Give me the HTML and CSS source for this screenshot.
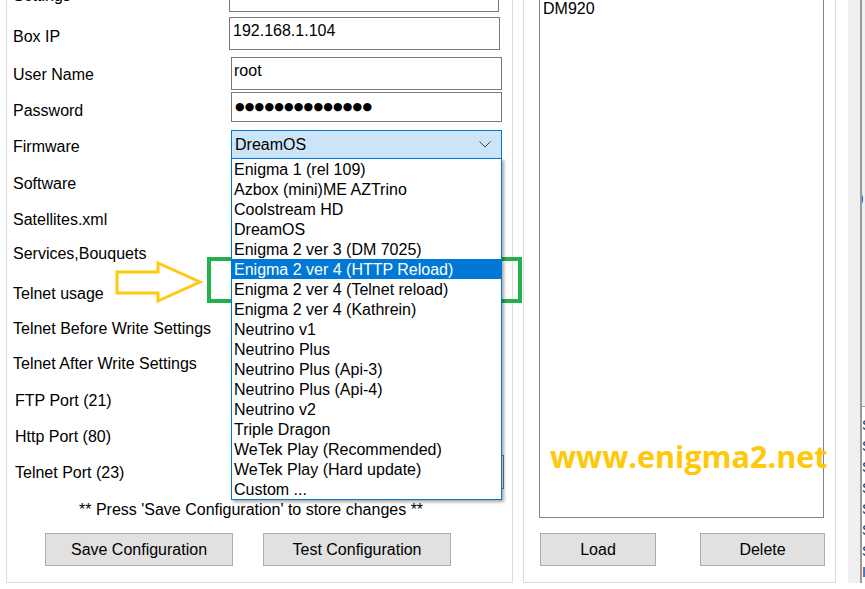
FILE: index.html
```html
<!DOCTYPE html>
<html lang="en">
<head>
    <meta charset="UTF-8">
    <title>Box Configuration</title>
    <link rel="stylesheet" href="styles.css">
</head>
<body>
    <div class="screen">
        <div class="window">
            <!-- Left group: box settings -->
            <section class="group config">
                <div class="row r0"><span class="label">Settings</span><div class="field f0"></div></div>
                <div class="row r1"><span class="label">Box IP</span><div class="field f-ip">192.168.1.104</div></div>
                <div class="row r2"><span class="label">User Name</span><div class="field f-user">root</div></div>
                <div class="row r3"><span class="label">Password</span><div class="field f-pass">●●●●●●●●●●●●●●</div></div>
                <div class="row r4">
                    <span class="label">Firmware</span>
                    <div class="combo">
                        <span>DreamOS</span>
                        <svg class="chevron" width="12" height="7" viewBox="0 0 12 7"><polyline points="0.5,0.5 6,6 11.5,0.5" fill="none" stroke="#444" stroke-width="1"/></svg>
                        <ul class="dropdown">
                            <li>Enigma 1 (rel 109)</li>
                            <li>Azbox (mini)ME AZTrino</li>
                            <li>Coolstream HD</li>
                            <li>DreamOS</li>
                            <li>Enigma 2 ver 3 (DM 7025)</li>
                            <li class="active">Enigma 2 ver 4 (HTTP Reload)</li>
                            <li>Enigma 2 ver 4 (Telnet reload)</li>
                            <li>Enigma 2 ver 4 (Kathrein)</li>
                            <li>Neutrino v1</li>
                            <li>Neutrino Plus</li>
                            <li>Neutrino Plus (Api-3)</li>
                            <li>Neutrino Plus (Api-4)</li>
                            <li>Neutrino v2</li>
                            <li>Triple Dragon</li>
                            <li>WeTek Play (Recommended)</li>
                            <li>WeTek Play (Hard update)</li>
                            <li>Custom ...</li>
                        </ul>
                    </div>
                </div>
                <div class="row r5"><span class="label">Software</span></div>
                <div class="row r6"><span class="label">Satellites.xml</span></div>
                <div class="row r7"><span class="label">Services,Bouquets</span></div>
                <div class="row r8"><span class="label">Telnet usage</span></div>
                <div class="row r9"><span class="label">Telnet Before Write Settings</span></div>
                <div class="row r10"><span class="label">Telnet After Write Settings</span></div>
                <div class="row r11"><span class="label port">FTP Port (21)</span></div>
                <div class="row r12"><span class="label port">Http Port (80)</span></div>
                <div class="row r13"><span class="label port">Telnet Port (23)</span><div class="field f-telnet"></div></div>

                <p class="note">** Press 'Save Configuration' to store changes **</p>
                <div class="buttons">
                    <button class="btn btn-save">Save Configuration</button>
                    <button class="btn btn-test">Test Configuration</button>
                </div>
            </section>

            <!-- Right group: saved boxes -->
            <section class="group boxes">
                <div class="listbox">
                    <div class="list-item">DM920</div>
                </div>
                <div class="buttons">
                    <button class="btn btn-load">Load</button>
                    <button class="btn btn-delete">Delete</button>
                </div>
            </section>

            <!-- Neighbour window edge -->
            <div class="side">
                <div class="side-pane">
                    <div class="side-top"><span class="side-glyph">)</span></div>
                    <div class="side-log">S<br>S<br>S<br>S<br>S<br>S<br>S<br>I</div>
                </div>
            </div>
        </div>

        <!-- Annotations over the screenshot -->
        <svg class="arrow" width="100" height="50" viewBox="110 258 100 50">
            <polygon points="117,272 158,272 158,263 200,282 158,301 158,293 117,293" fill="none" stroke="#ffc90e" stroke-width="3"/>
        </svg>
        <div class="highlight"></div>
        <div class="watermark">www.enigma2.net</div>
    </div>
</body>
</html>
```

FILE: styles.css
```css
* {
    box-sizing: border-box;
}

body {
    margin: 0;
    font-family: "Liberation Sans", Arial, sans-serif;
    font-size: 16px;
    color: #000;
    background: #fff;
}

.screen {
    position: relative;
    width: 865px;
    height: 589px;
    overflow: hidden;
}

.window {
    display: flex;
    margin-top: -30px;
    padding-left: 6px;
}

.group {
    border: 1px solid #dcdcdc;
}

/* Left group */
.config {
    width: 507px;
    padding: 4px 0 10px 0;
}

.row {
    display: flex;
    align-items: flex-start;
    line-height: 18px;
}

.label {
    width: 222px;
    padding-left: 6px;
    flex-shrink: 0;
}

.label.port {
    padding-left: 8px;
}

/* row heights, label placed in the middle of each */
.r0 { height: 40px; }
.r1 { height: 40px; }
.r2 { height: 37px; }
.r3 { height: 36px; }
.r4 { height: 36px; }
.r5 { height: 37px; }
.r6 { height: 35px; }
.r7 { height: 36px; }
.r8 { height: 38px; }
.r9 { height: 35px; }
.r10 { height: 36px; }
.r11 { height: 37px; }
.r12 { height: 35px; }
.r13 { height: 37px; }

.row .label {
    align-self: center;
    margin-top: 2px;
}

.r1 .label { margin-top: 4px; }
.r7 .label { margin-top: 0; }
.r8 .label { margin-top: 5px; }

.field {
    border: 1px solid #7a7a7a;
    background: #fff;
    padding: 4px 3px;
}

.f0 {
    width: 270px;
    height: 32px;
    margin-top: 5px;
}

.f-ip {
    width: 271px;
    height: 33px;
    margin-top: 2px;
}

.f-user {
    width: 271px;
    height: 33px;
    margin-top: 2px;
    margin-left: 2px;
    padding-left: 2px;
}

.f-pass {
    width: 271px;
    height: 30px;
    margin-left: 2px;
    padding: 5px 0 0 3px;
    font-family: "DejaVu Sans", sans-serif;
    font-size: 11px;
    letter-spacing: 0.2px;
    line-height: 18px;
}

.f-telnet {
    width: 273px;
    height: 34px;
    margin-top: 2px;
    margin-left: 2px;
}

.combo {
    position: relative;
    display: flex;
    align-items: center;
    width: 271px;
    height: 28px;
    margin-top: 2px;
    margin-left: 2px;
    padding: 0 3px;
    background: #cce4f7;
    border: 1px solid #0078d7;
    border-bottom: none;
}

.chevron {
    margin-left: auto;
    margin-right: 7px;
}

.dropdown {
    position: absolute;
    top: 100%;
    left: -1px;
    width: 271px;
    margin: 0;
    padding: 0;
    list-style: none;
    background: #fff;
    border: 1px solid #0078d7;
    box-shadow: 2px 2px 3px rgba(0, 0, 0, 0.35);
    z-index: 5;
}

.dropdown li {
    height: 20px;
    line-height: 21px;
    padding-left: 2px;
    white-space: nowrap;
}

.dropdown li.active {
    background: #0078d7;
    color: #fff;
}

.note {
    margin: 10px 0 0 72px;
    line-height: 20px;
}

.buttons {
    display: flex;
    margin-top: 13px;
}

.btn {
    height: 33px;
    font-family: "Liberation Sans", Arial, sans-serif;
    font-size: 16px;
    color: #000;
    background: #e1e1e1;
    border: 1px solid #adadad;
    padding: 0;
}

.btn-save {
    width: 188px;
    margin-left: 38px;
}

.btn-test {
    width: 188px;
    margin-left: 30px;
}

/* Right group */
.boxes {
    width: 313px;
    margin-left: 10px;
    padding: 27px 0 10px 0;
}

.listbox {
    width: 285px;
    height: 520px;
    margin-left: 15px;
    border: 1px solid #828282;
    padding: 1px 3px;
}

.list-item {
    line-height: 18px;
}

.boxes .buttons {
    margin-top: 15px;
}

.btn-load {
    width: 116px;
    margin-left: 16px;
}

.btn-delete {
    width: 125px;
    margin-left: 44px;
}

/* Edge of the next window */
.side {
    width: 17px;
    margin-left: 12px;
    background: #f0f0f0;
    display: flex;
}

.side-pane {
    margin-left: 12px;
    flex: 1;
    border-left: 2px solid #9a9a9a;
    display: flex;
    flex-direction: column;
    overflow: hidden;
}

.side-top {
    height: 437px;
    border-bottom: 1px solid #a0a0a0;
    font-size: 14px;
    padding-top: 220px;
    color: #1e3c78;
}

.side-glyph {
    margin-left: -3px;
}

.side-log {
    flex: 1;
    background: #fff;
    font-size: 14px;
    line-height: 21px;
    padding-top: 8px;
    color: #203050;
    white-space: nowrap;
}

/* Annotations */
.arrow {
    position: absolute;
    left: 110px;
    top: 258px;
}

.highlight {
    position: absolute;
    left: 207px;
    top: 257px;
    width: 315px;
    height: 46px;
    border: 4px solid #22b14c;
}

.watermark {
    position: absolute;
    left: 550px;
    top: 436px;
    font-family: "Open Sans", sans-serif;
    font-weight: 700;
    font-size: 30.5px;
    line-height: 40px;
    color: #ffc808;
}
```
